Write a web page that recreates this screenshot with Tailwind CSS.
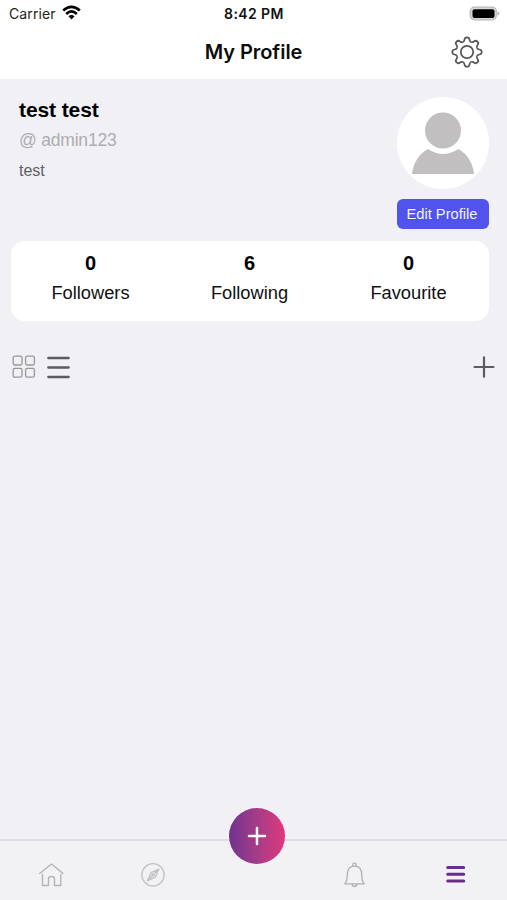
<!DOCTYPE html>
<html lang="en">
<head>
<meta charset="utf-8">
<meta name="viewport" content="width=device-width, initial-scale=1">
<title>My Profile</title>
<script src="https://cdn.jsdelivr.net/npm/@tailwindcss/browser@4"></script>
</head>
<body class="flex h-[900px] w-[507px] flex-col overflow-hidden bg-[#f1f0f5] font-['Liberation_Sans',Arial,sans-serif] text-black">
<header class="h-[79px] shrink-0 bg-white font-[Inter,sans-serif]">
  <div class="grid h-[28px] grid-cols-3 items-center pl-[9px] pr-[7px]">
    <div class="flex items-center gap-[6px] text-[14px] leading-none text-[#222]">
      <span class="tracking-[0.1px]">Carrier</span>
      <svg class="mt-[-3px] h-[15px] w-[19px]" viewBox="0 0 19 15" fill="none" stroke="#000" stroke-width="2.7"><path d="M1.200 5.600Q9.500 -2 17.800 5.600M4.200 8.900Q9.500 4 14.800 8.900"/><path d="M6.500 11.300Q9.500 8.800 12.500 11.300L9.500 14.400Z" fill="#000" stroke="none"/></svg>
    </div>
    <div class="pr-[1px] text-center text-[14px] leading-none font-semibold tracking-[0.4px] text-[#111]">8:42 PM</div>
    <svg class="mt-[-1px] h-[15px] w-[31px] justify-self-end" viewBox="0 0 31 15"><rect x="1.300" y="1.200" width="26" height="12.600" rx="4" fill="#d9d9d9" stroke="#b9b9b9" stroke-width="1.300"/><rect x="3.500" y="3.200" width="22" height="8.800" rx="2" fill="#000"/><path d="M28.500 5.200Q30.500 6 30.500 7.500T28.500 9.800Z" fill="#b5b5b5"/></svg>
  </div>
  <div class="grid h-[48px] grid-cols-[1fr_auto_1fr] items-center pr-[24px] pl-[24px]">
    <span></span>
    <h1 class="text-[20px] leading-none font-semibold tracking-[-0.050px] text-[#0c0c0c]">My Profile</h1>
    <svg class="h-[32px] w-[32px] justify-self-end" viewBox="-16 -16 32 32" fill="none" stroke="#555" stroke-width="1.700">
      <defs><path id="tooth" d="M-4.130 -9.980C-3.200 -10.360 -2.700 -11.200 -2.500 -12.400C-2.200 -15.500 2.200 -15.500 2.500 -12.400C2.700 -11.200 3.200 -10.360 4.130 -9.980"/></defs>
      <use href="#tooth"/><use href="#tooth" transform="rotate(45)"/><use href="#tooth" transform="rotate(90)"/><use href="#tooth" transform="rotate(135)"/><use href="#tooth" transform="rotate(180)"/><use href="#tooth" transform="rotate(225)"/><use href="#tooth" transform="rotate(270)"/><use href="#tooth" transform="rotate(315)"/>
      <circle r="6.200"/>
    </svg>
  </div>
</header>
<main class="flex flex-1 flex-col">
  <section class="flex h-[162px] justify-between pt-[18px] pr-[18px] pl-[19px]">
    <div>
      <h2 class="text-[21px] leading-[25px] font-bold tracking-[-0.100px]">test test</h2>
      <p class="mt-[8px] text-[17.500px] leading-[20px] tracking-[-0.200px] text-[#adadb1]">@ admin123</p>
      <p class="mt-[12px] text-[16px] leading-[18px] text-[#606064]">test</p>
    </div>
    <div class="w-[92px]">
      <svg class="h-[92px] w-[92px]" viewBox="0 0 92 92"><circle cx="46" cy="46" r="46" fill="#fff"/><circle cx="46" cy="33.500" r="18" fill="#c1bfc0"/><path d="M15 77Q17 60 31 52Q46 62 61.500 52Q75 60 77 77Z" fill="#c1bfc0"/></svg>
      <button class="mt-[10px] block h-[30px] w-[92px] rounded-[6px] bg-[#5054ed] pr-[2px] text-[14.700px] leading-[30px] whitespace-nowrap text-[#f3f3ff]">Edit Profile</button>
    </div>
  </section>
  <section class="mr-[18px] ml-[11px] grid h-[80px] grid-cols-3 rounded-[14px] bg-white pt-[10px] pr-[1px] text-center">
    <div><p class="text-[20px] leading-[24px] font-bold">0</p><p class="mt-[7px] text-[18.300px] leading-[22px] text-[#111]">Followers</p></div>
    <div><p class="text-[20px] leading-[24px] font-bold">6</p><p class="mt-[7px] text-[18.300px] leading-[22px] text-[#111]">Following</p></div>
    <div><p class="text-[20px] leading-[24px] font-bold">0</p><p class="mt-[7px] text-[18.300px] leading-[22px] text-[#111]">Favourite</p></div>
  </section>
  <section class="mt-[34px] flex h-[24px] items-center pr-[12px] pl-[12px]">
    <svg class="h-[24px] w-[24px]" viewBox="0 0 24 24" fill="none" stroke="#98989b" stroke-width="1.300"><rect x="1.200" y="1.200" width="8.800" height="8.800" rx="1.500"/><rect x="13.600" y="1.200" width="8.800" height="8.800" rx="1.500"/><rect x="1.200" y="13.400" width="8.800" height="8.800" rx="1.500"/><rect x="13.600" y="13.400" width="8.800" height="8.800" rx="1.500"/></svg>
    <svg class="ml-[11px] h-[24px] w-[24px]" viewBox="0 0 24 24" stroke="#5c5c60" stroke-width="2.300" stroke-linecap="round"><path d="M1.300 3H21.700M1.300 12.500H21.700M1.300 22H21.700"/></svg>
    <svg class="ml-auto h-[24px] w-[22px]" viewBox="0 0 22 24" stroke="#5c5c60" stroke-width="2.200" stroke-linecap="round"><path d="M1.500 12H20.500M11 2.300V21.700"/></svg>
  </section>
</main>
<nav class="relative h-[61px] shrink-0 border-t-2 border-[#e0e0e3] bg-[#f2f2f5] pt-[21px]">
  <div class="flex items-center pl-[38px]">
    <svg class="h-[26px] w-[26px]" viewBox="0 0 26 26" fill="none" stroke="#b4b4b8" stroke-width="1.400" stroke-linecap="round" stroke-linejoin="round"><path d="M1.700 11.500L13.500 2L25 11.500M4.500 12.500V23.500H10.500V17Q10.500 14.500 13.500 14.500T16.500 17V23.500H22.800V12.500"/></svg>
    <svg class="ml-[76px] h-[26px] w-[26px]" viewBox="0 0 26 26" fill="none" stroke="#c3c3c7" stroke-width="1.400" stroke-linejoin="round"><circle cx="13" cy="12.800" r="11.200"/><path d="M18.800 7.200L15.200 15.200L7.400 18.800L11 10.700ZM17.900 8.100L8.500 17.700"/><circle cx="13" cy="13" r="1"/></svg>
    <svg class="ml-[175px] h-[26px] w-[26px]" viewBox="0 0 26 26" fill="none" stroke="#b0b0b4" stroke-width="1.300" stroke-linejoin="round"><path d="M3.800 21.800Q6.200 19.500 6.200 13Q6.200 4.200 13.500 4.200T20.800 13Q20.800 19.500 23.200 21.800ZM11.800 4.300V2.700Q11.800 1.200 13.500 1.200T15.200 2.700V4.300M11 21.800Q11 24.500 13.500 24.500T16 21.800"/></svg>
    <svg class="ml-[78px] h-[26px] w-[22px]" viewBox="0 0 22 26" stroke="#6b2d88" stroke-width="3" stroke-linecap="round"><path d="M2.700 5.600H18.700M2.700 12.300H18.700M2.700 19H18.700"/></svg>
  </div>
  <button class="absolute top-[-33px] left-[229px] flex size-[56px] items-center justify-center rounded-full bg-linear-to-r from-[#70328f] to-[#df377b]">
    <svg class="size-[20px]" viewBox="0 0 20 20" stroke="#fff" stroke-width="2.500" stroke-linecap="round"><path d="M2 10H18M10 2V18"/></svg>
  </button>
</nav>
</body>
</html>
